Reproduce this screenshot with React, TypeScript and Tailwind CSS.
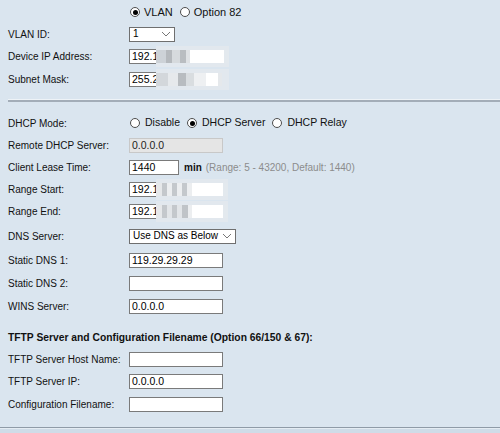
import React from 'react'

type Cell = [number, string]

// pixelated mosaic that hides part of an address
function Mosaic({ left, cells }: { left: number; cells: Cell[] }) {
  return (
    <div className="absolute top-[-3px] flex h-[21px] flex-col" style={{ left }}>
      <div className="flex h-[4px]">
        {cells.map(([w], i) => (
          <div key={i} className="h-full bg-[#e2e8ee]" style={{ width: w }} />
        ))}
      </div>
      <div className="flex h-[13px]">
        {cells.map(([w, c], i) => (
          <div key={i} className="h-full" style={{ width: w, background: c }} />
        ))}
      </div>
      <div className="flex h-[4px]">
        {cells.map(([w], i) => (
          <div key={i} className="h-full bg-[#e2e8ee]" style={{ width: w }} />
        ))}
      </div>
    </div>
  )
}

function TextBox({ value = '', width = 94, gray = false }: { value?: string; width?: number; gray?: boolean }) {
  return (
    <div
      className={`flex h-[15px] items-center whitespace-nowrap px-[2px] text-[10.5px] leading-none ${
        gray ? 'border border-[#c8c8c8] bg-[#e5e5e5] text-[#222]' : 'border border-[#7a7a7a] bg-white text-black'
      }`}
      style={{ width }}
    >
      {value}
    </div>
  )
}

function Select({ value, width }: { value: string; width: number }) {
  return (
    <div
      className="flex h-[15px] items-center justify-between whitespace-nowrap border border-[#6f6f6f] bg-white pl-[3px] pr-[3px] text-[10px] leading-none text-black"
      style={{ width }}
    >
      <span>{value}</span>
      <svg width="10" height="6" viewBox="0 0 10 6" fill="none" className="shrink-0">
        <polyline points="1,1 5,5 9,1" stroke="#777" strokeWidth="1" />
      </svg>
    </div>
  )
}

function Radio({ checked = false }: { checked?: boolean }) {
  return (
    <span className="inline-flex h-[10px] w-[10px] shrink-0 items-center justify-center rounded-full border border-[#4d4d4d] bg-white">
      {checked && <span className="h-[5px] w-[5px] rounded-full bg-black" />}
    </span>
  )
}

function Row({ label, h, children }: { label?: string; h: number; children?: React.ReactNode }) {
  return (
    <div className="grid grid-cols-[121px_1fr] items-center" style={{ height: h }}>
      <div className="whitespace-nowrap">{label}</div>
      <div className="flex items-center">{children}</div>
    </div>
  )
}

export default function App() {
  return (
    <div
      className="h-[433px] w-[500px] overflow-hidden bg-[#dae5ef] text-[10px] text-[#111]"
      style={{ fontFamily: '"Liberation Sans", Arial, sans-serif' }}
    >
      <div className="pl-2 pt-[1px]">
        <Row h={22}>
          <div className="flex items-center gap-[4px] pl-[1px] text-[11px]">
            <Radio checked />
            <span className="mr-[3px]">VLAN</span>
            <Radio />
            <span>Option 82</span>
          </div>
        </Row>
        <Row label="VLAN ID:" h={22}>
          <Select value="1" width={46} />
        </Row>
        <Row label="Device IP Address:" h={23}>
          <div className="relative">
            <TextBox value="192.1" />
            <Mosaic
              left={27}
              cells={[
                [10, '#cdd2d7'],
                [6, '#b5b9bd'],
                [8, '#d6dadd'],
                [6, '#b9bdc1'],
                [4, '#dfe2e5'],
                [34, '#ffffff'],
                [5, '#e3e9ee'],
              ]}
            />
          </div>
        </Row>
        <Row label="Subnet Mask:" h={22}>
          <div className="relative">
            <TextBox value="255.2" />
            <Mosaic
              left={27}
              cells={[
                [12, '#d3d7db'],
                [10, '#e6e9ec'],
                [8, '#b8bcc0'],
                [8, '#d9dde0'],
                [12, '#eef0f2'],
                [12, '#ffffff'],
                [4, '#e5e8eb'],
                [7, '#e2e8ee'],
              ]}
            />
          </div>
        </Row>
      </div>

      <div className="ml-2 mt-[9px] border-t border-[#eef3f7]" />
      <div className="ml-2 border-t-2 border-[#a3adb8]" />

      <div className="pl-2 pt-[10px]">
        <Row label="DHCP Mode:" h={22}>
          <div className="flex items-center gap-[5px] pl-[1px] text-[10.5px]">
            <Radio />
            <span className="mr-[2px]">Disable</span>
            <Radio checked />
            <span className="mr-[2px]">DHCP Server</span>
            <Radio />
            <span>DHCP Relay</span>
          </div>
        </Row>
        <Row label="Remote DHCP Server:" h={22}>
          <TextBox value="0.0.0.0" gray />
        </Row>
        <Row label="Client Lease Time:" h={22}>
          <TextBox value="1440" width={50} />
          <span className="ml-[5px] font-bold">min</span>
          <span className="ml-[4px] text-[#8c8c8c]">(Range: 5 - 43200, Default: 1440)</span>
        </Row>
        <Row label="Range Start:" h={22}>
          <div className="relative">
            <TextBox value="192.1" />
            <Mosaic
              left={27}
              cells={[
                [6, '#e6e8ea'],
                [5, '#c4c8cc'],
                [5, '#eceef0'],
                [5, '#c4c8cc'],
                [5, '#eceef0'],
                [5, '#c4c8cc'],
                [5, '#eceef0'],
                [31, '#ffffff'],
                [5, '#e3e9ee'],
              ]}
            />
          </div>
        </Row>
        <Row label="Range End:" h={23}>
          <div className="relative">
            <TextBox value="192.1" />
            <Mosaic
              left={27}
              cells={[
                [6, '#e6e8ea'],
                [5, '#c4c8cc'],
                [5, '#e2e5e8'],
                [5, '#c4c8cc'],
                [5, '#e2e5e8'],
                [6, '#c0c4c8'],
                [4, '#eceef0'],
                [31, '#ffffff'],
                [5, '#e3e9ee'],
              ]}
            />
          </div>
        </Row>
        <Row label="DNS Server:" h={26}>
          <Select value="Use DNS as Below" width={107} />
        </Row>
        <Row label="Static DNS 1:" h={23}>
          <TextBox value="119.29.29.29" />
        </Row>
        <Row label="Static DNS 2:" h={23}>
          <TextBox />
        </Row>
        <Row label="WINS Server:" h={23}>
          <TextBox value="0.0.0.0" />
        </Row>
      </div>

      <div className="pl-2 pt-[10px]">
        <div className="flex h-[20px] items-center whitespace-nowrap text-[10.3px] font-bold">
          TFTP Server and Configuration Filename (Option 66/150 &amp; 67):
        </div>
        <Row label="TFTP Server Host Name:" h={22}>
          <TextBox />
        </Row>
        <Row label="TFTP Server IP:" h={23}>
          <TextBox value="0.0.0.0" />
        </Row>
        <Row label="Configuration Filename:" h={22}>
          <TextBox />
        </Row>
      </div>

      <div className="mt-[12px] border-t border-[#8f9ba7]" />
      <div className="h-[10px] border-t border-[#e4ecf3] bg-[#cfdce8]" />
    </div>
  )
}
